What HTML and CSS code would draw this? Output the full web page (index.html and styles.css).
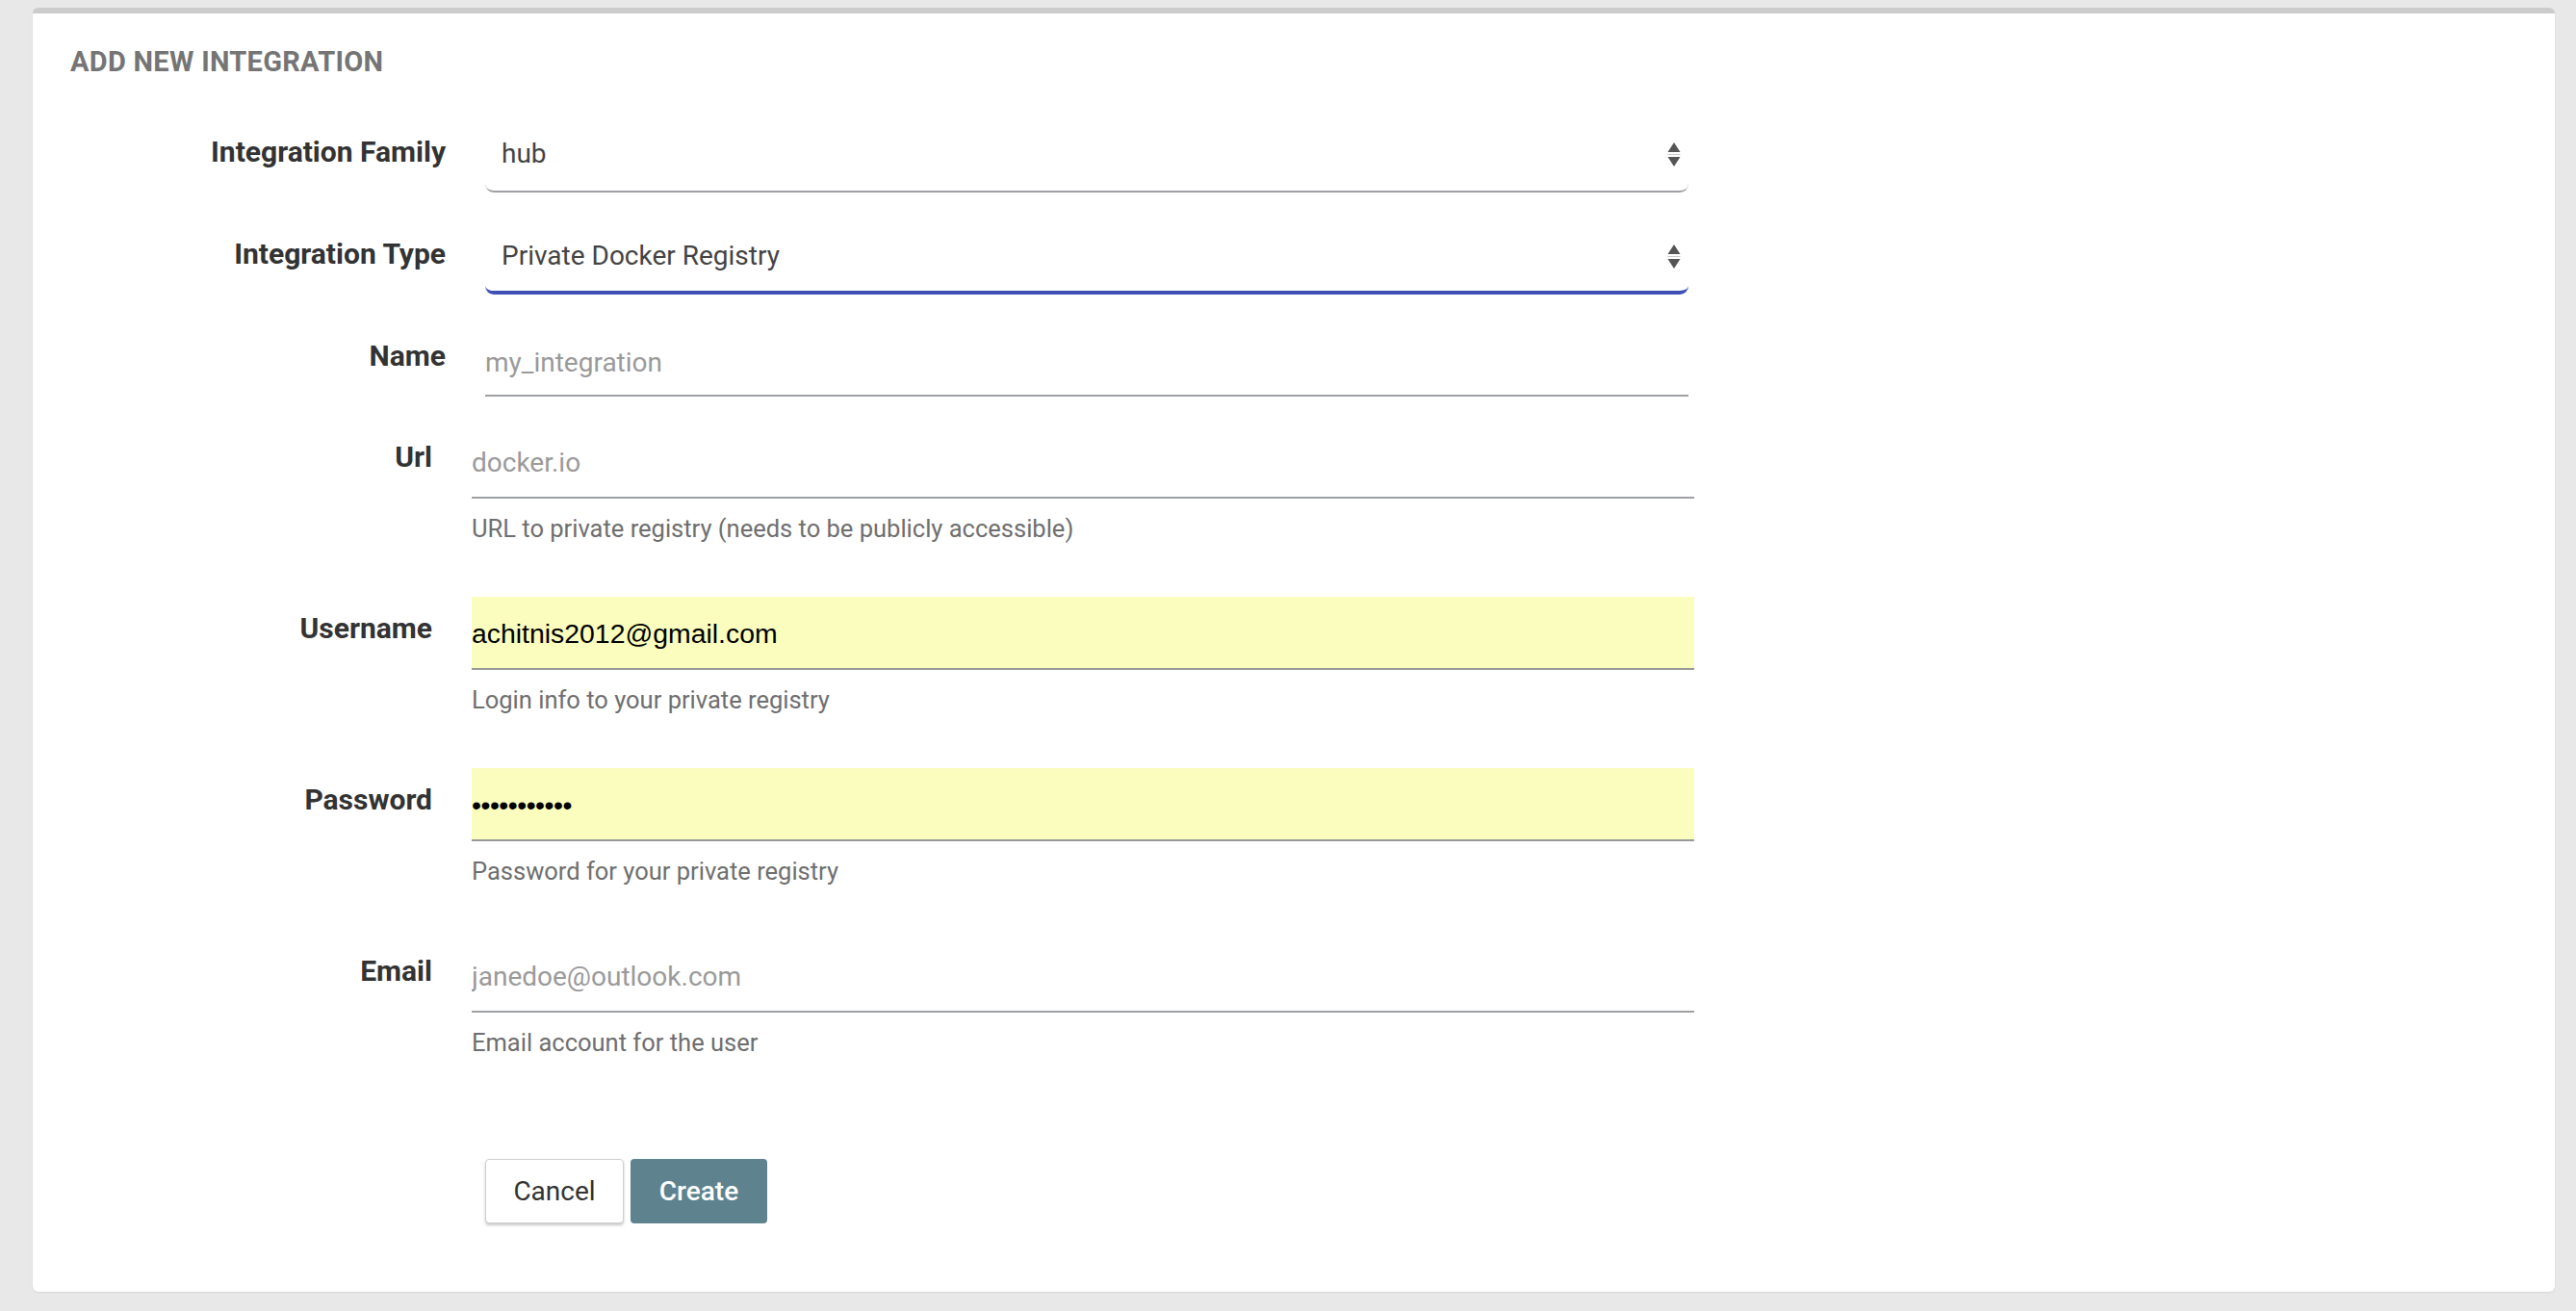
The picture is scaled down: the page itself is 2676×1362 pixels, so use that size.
FILE: index.html
```html
<!DOCTYPE html>
<html>
<head>
<meta charset="utf-8">
<link rel="stylesheet" href="styles.css">
</head>
<body>
<div class="page">
  <div class="card">
    <h2 class="title">ADD NEW INTEGRATION</h2>

    <div class="section s1">
      <div class="row">
        <label class="lbl">Integration Family</label>
        <div class="select">
          <span class="sel-text">hub</span>
          <svg class="arrows" width="14" height="26" viewBox="0 0 14 26"><path d="M7 0 L13.5 10 L0.5 10 Z" fill="#555"/><rect x="0.5" y="12" width="13" height="1" fill="#c8c8c8"/><path d="M0.5 15 L13.5 15 L7 25 Z" fill="#555"/></svg>
        </div>
      </div>
      <div class="row">
        <label class="lbl">Integration Type</label>
        <div class="select focused">
          <span class="sel-text">Private Docker Registry</span>
          <svg class="arrows" width="14" height="26" viewBox="0 0 14 26"><path d="M7 0 L13.5 10 L0.5 10 Z" fill="#555"/><rect x="0.5" y="12" width="13" height="1" fill="#c8c8c8"/><path d="M0.5 15 L13.5 15 L7 25 Z" fill="#555"/></svg>
        </div>
      </div>
      <div class="row">
        <label class="lbl">Name</label>
        <input class="inp name-inp" type="text" placeholder="my_integration">
      </div>
    </div>

    <div class="section s2">
      <div class="row">
        <label class="lbl">Url</label>
        <div class="field">
          <input class="inp" type="text" placeholder="docker.io">
          <p class="help">URL to private registry (needs to be publicly accessible)</p>
        </div>
      </div>
      <div class="row">
        <label class="lbl">Username</label>
        <div class="field">
          <input class="inp autofill" type="text" value="achitnis2012@gmail.com">
          <p class="help">Login info to your private registry</p>
        </div>
      </div>
      <div class="row">
        <label class="lbl">Password</label>
        <div class="field">
          <input class="inp autofill pw" type="password" value="abcdefghijk">
          <p class="help">Password for your private registry</p>
        </div>
      </div>
      <div class="row">
        <label class="lbl">Email</label>
        <div class="field">
          <input class="inp" type="text" placeholder="janedoe@outlook.com">
          <p class="help">Email account for the user</p>
        </div>
      </div>
    </div>

    <div class="actions">
      <button class="btn btn-cancel">Cancel</button>
      <button class="btn btn-create">Create</button>
    </div>
  </div>
</div>
</body>
</html>
```

FILE: styles.css
```css
html, body {
  margin: 0;
  padding: 0;
  background: #e8e8e8;
  overflow: hidden;
}

.page {
  padding: 8px 22px 20px 34px;
}

.card {
  background: #ffffff;
  border-top: 6px solid #cccccc;
  border-radius: 6px;
  box-shadow: 0 1px 2px rgba(0, 0, 0, 0.08);
  padding-bottom: 71px;
  font-family: Roboto, "Liberation Sans", sans-serif;
}

.title {
  margin: 34px 0 0 39px;
  font-size: 29px;
  line-height: 32px;
  font-weight: 700;
  color: #757575;
  letter-spacing: 0.3px;
}

.section {
  display: flex;
  flex-direction: column;
  margin-left: 66px;
}

.s1 {
  margin-top: 50px;
  gap: 36px;
}

.s2 {
  margin-top: 30px;
  gap: 56px;
}

.row {
  display: grid;
  column-gap: 41px;
  align-items: start;
}

.s1 .row {
  grid-template-columns: 363px 1250px;
}

.s2 .row {
  grid-template-columns: 349px 1270px;
}

.lbl {
  display: block;
  text-align: right;
  font-size: 30px;
  line-height: 36px;
  font-weight: 700;
  color: #333333;
}

.s1 .lbl {
  padding-top: 10px;
}

.s2 .lbl {
  padding-top: 15px;
}

.select {
  position: relative;
  box-sizing: border-box;
  height: 70px;
  border-bottom: 2px solid #9ea0a3;
  border-radius: 9px;
  padding: 14px 0 0 17px;
}

.select.focused {
  border-bottom: 4px solid #3f51b5;
}

.sel-text {
  display: block;
  font-size: 28px;
  line-height: 32px;
  color: #444444;
}

.arrows {
  position: absolute;
  right: 8px;
  top: 18px;
}

.inp {
  display: block;
  box-sizing: border-box;
  width: 100%;
  height: 76px;
  margin: 0;
  padding: 3px 0 0 0;
  border: none;
  border-bottom: 2px solid #9ea0a3;
  border-radius: 0;
  background: transparent;
  outline: none;
  font-family: Roboto, "Liberation Sans", sans-serif;
  font-size: 28px;
  color: #333333;
}

.name-inp {
  height: 70px;
  padding-top: 0;
}

.inp::placeholder {
  color: #9a9a9a;
  opacity: 1;
}

.inp.autofill {
  background: #fafdbd;
  color: #000000;
  font-family: "Liberation Sans", Arial, sans-serif;
  font-size: 28.4px;
  border-bottom-color: #979a97;
}

.inp.pw {
  letter-spacing: -0.5px;
}

.help {
  margin: 16px 0 0 0;
  font-size: 25.5px;
  line-height: 30px;
  color: #6f6f6f;
}

.actions {
  display: flex;
  gap: 7px;
  margin: 106px 0 0 470px;
}

.btn {
  box-sizing: border-box;
  height: 67px;
  border-radius: 4px;
  font-family: Roboto, "Liberation Sans", sans-serif;
  font-size: 28px;
  padding: 0 0 0 0;
  cursor: pointer;
}

.btn-cancel {
  width: 144px;
  background: #ffffff;
  color: #333333;
  border: 1px solid #cfcfcf;
  box-shadow: 0 2px 3px rgba(0, 0, 0, 0.22);
}

.btn-create {
  width: 142px;
  background: #5e838f;
  color: #ffffff;
  border: none;
  font-weight: 500;
}
```
